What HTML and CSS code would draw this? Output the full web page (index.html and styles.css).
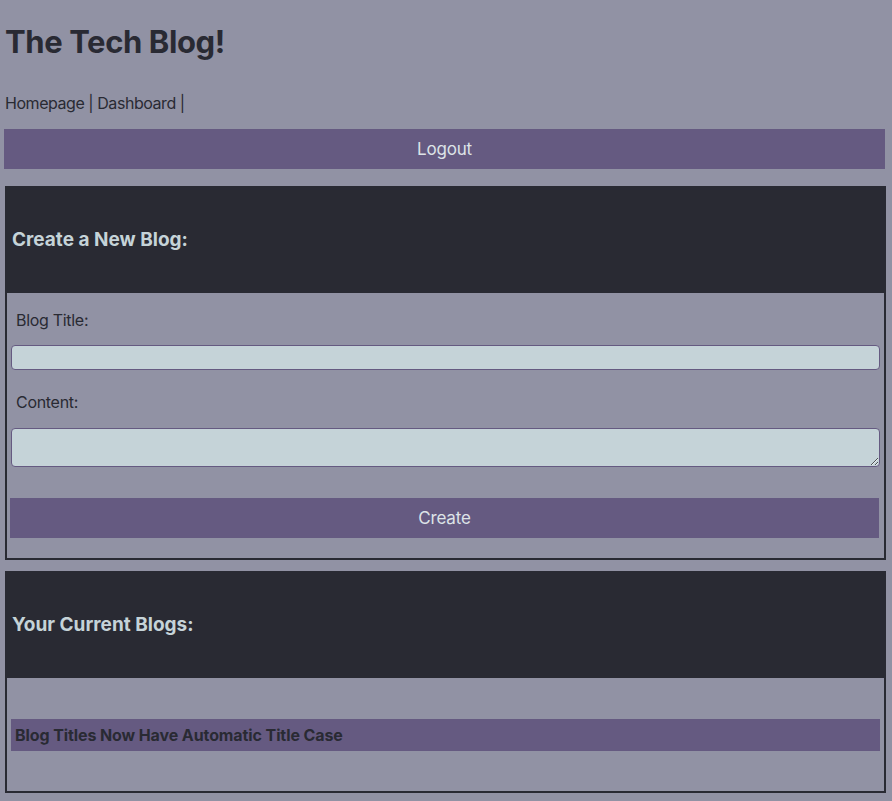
FILE: index.html
```html
<!DOCTYPE html>
<html lang="en">
<head>
<meta charset="utf-8">
<title>The Tech Blog!</title>
<link rel="stylesheet" href="styles.css">
</head>
<body>
<header class="site-header">
  <h1 class="site-title">The Tech Blog!</h1>
  <nav class="site-nav">Homepage | Dashboard |</nav>
  <button class="btn btn-logout" type="button">Logout</button>
</header>
<main class="main">
  <section class="card card-create">
    <div class="card-head"><h3 class="card-title">Create a New Blog:</h3></div>
    <form class="card-body form">
      <label class="form-label" for="title">Blog Title:</label>
      <input class="form-input" id="title" type="text">
      <label class="form-label label-content" for="content">Content:</label>
      <textarea class="form-textarea" id="content"></textarea>
      <button class="btn btn-create" type="button">Create</button>
    </form>
  </section>
  <section class="card card-list">
    <div class="card-head"><h3 class="card-title">Your Current Blogs:</h3></div>
    <div class="card-body list">
      <div class="post-item">Blog Titles Now Have Automatic Title Case</div>
    </div>
  </section>
</main>
</body>
</html>
```
FILE: styles.css
```css
* { box-sizing: border-box; }
html, body { margin: 0; padding: 0; }
body {
  background: #9192a4;
  color: #292a33;
  font-family: Inter, "Noto Sans", "Liberation Sans", sans-serif;
  font-size: 16px;
  width: 892px;
}
.site-header {
  display: flex;
  flex-direction: column;
  padding: 0 7px 0 4px;
}
.site-title {
  margin: 22px 0 0 1px;
  font-size: 31px;
  line-height: 40px;
  font-weight: 700;
  letter-spacing: -0.4px;
}
.site-nav {
  margin: 31px 0 0 1px;
  line-height: 20px;
  letter-spacing: -0.45px;
}
.btn {
  border: none;
  background: #655a81;
  color: #dde3e7;
  font-family: inherit;
  font-size: 17px;
  letter-spacing: -0.2px;
  height: 40px;
  width: 100%;
  padding: 0;
}
.btn-logout { margin-top: 16px; }
.main {
  display: flex;
  flex-direction: column;
  gap: 11px;
  padding: 17px 6px 0 5px;
}
.card {
  border: 2px solid #292a33;
}
.card-head {
  background: #292a33;
  margin: -2px -1px 0;
  height: 107px;
  display: flex;
  align-items: center;
  padding-left: 6px;
}
.card-title {
  margin: 0;
  color: #c5d3d8;
  font-size: 19px;
  font-weight: 700;
}
.form {
  display: flex;
  flex-direction: column;
  padding: 17px 4px 20px 4px;
}
.form-label {
  line-height: 20px;
  padding-left: 5px;
  letter-spacing: -0.3px;
}
.form-input {
  margin-top: 15px;
  height: 25px;
  background: #c5d3d8;
  border: 1px solid #655a81;
  border-radius: 4px;
}
.label-content { margin-top: 22px; }
.form-textarea {
  margin-top: 16px;
  height: 39px;
  background: #c5d3d8;
  border: 1px solid #655a81;
  border-radius: 4px;
  resize: vertical;
}
.btn-create {
  margin: 31px 1px 0 -1px;
  width: auto;
}
.list {
  padding: 41px 4px 40px 4px;
}
.post-item {
  background: #655a81;
  height: 32px;
  display: flex;
  align-items: center;
  padding-left: 4px;
  font-weight: 700;
  font-size: 16px;
  letter-spacing: -0.1px;
}
```
